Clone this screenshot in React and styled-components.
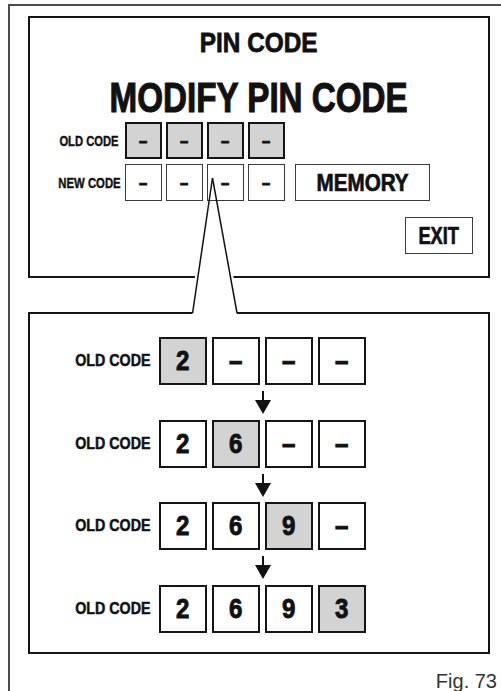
import React from "react";
import styled, { createGlobalStyle } from "styled-components";

const GlobalStyle = createGlobalStyle`
  html, body { margin: 0; padding: 0; background: #fff; }
  body {
    font-family: "Liberation Sans", Arial, sans-serif;
    color: #111;
  }
`;

const Squeeze = styled.span`
  display: inline-block;
  white-space: nowrap;
  transform: scaleX(${(p) => p.$x ?? 0.82});
  transform-origin: center;
  -webkit-text-stroke: ${(p) => p.$stroke ?? 0.6}px currentColor;
`;

const Frame = styled.div`
  margin: 4px 0 0 8px;
  height: 687px;
  box-sizing: border-box;
  border-top: 2px solid #4d4d4d;
  border-left: 2px solid #4d4d4d;
  padding: 10px 0 0 18px;
  overflow: hidden;
`;

const Figure = styled.div`
  position: relative;
  width: 462px;
  display: flex;
  flex-direction: column;
  gap: 34px;
`;

const Screen = styled.section`
  box-sizing: border-box;
  width: 462px;
  height: 262px;
  border: 2px solid #141414;
  display: flex;
  flex-direction: column;
`;

const ScreenTitle = styled.h2`
  margin: 11px 0 0;
  display: flex;
  justify-content: center;
  font-weight: 700;
  font-size: 28px;
  line-height: 28px;
`;

const MainTitle = styled.h1`
  margin: 20px 0 0;
  display: flex;
  justify-content: center;
  font-weight: 700;
  font-size: 42px;
  line-height: 42px;
`;

const Fields = styled.div`
  display: flex;
  flex-direction: column;
  gap: 5px;
  margin: 3px 0 0 26px;
`;

const FieldRow = styled.div`
  display: flex;
  align-items: center;
`;

const FieldLabel = styled.span`
  width: 66px;
  flex: none;
  margin-right: 3px;
  display: flex;
  justify-content: center;
  font-size: 14px;
  font-weight: 700;
`;

const Cells = styled.div`
  display: flex;
  gap: ${(p) => p.$gap}px;
`;

const Cell = styled.div`
  box-sizing: border-box;
  width: ${(p) => p.$size}px;
  height: ${(p) => p.$size}px;
  border: ${(p) => (p.$strong ? "2px solid #151515" : "1.5px solid #3a3a3a")};
  background: ${(p) => (p.$active ? "#d3d3d3" : "#fff")};
  display: flex;
  align-items: center;
  justify-content: center;
  font-weight: 700;
  font-size: ${(p) => p.$font}px;
  line-height: 1;
`;

const ScreenButton = styled.div`
  box-sizing: border-box;
  width: ${(p) => p.$w}px;
  height: 37px;
  border: 1.5px solid #3a3a3a;
  display: flex;
  align-items: center;
  justify-content: center;
  font-size: 24px;
  font-weight: 700;
  line-height: 1;
`;

const MemoryButton = styled(ScreenButton)`
  margin-left: 10px;
`;

const ExitButton = styled(ScreenButton)`
  align-self: flex-end;
  margin: 16px 15px 0 0;
`;

const Detail = styled.section`
  box-sizing: border-box;
  width: 462px;
  height: 342px;
  border: 2px solid #141414;
  padding: 23px 0 0 36px;
  display: flex;
  flex-direction: column;
`;

const StepRow = styled.div`
  display: flex;
  align-items: center;
`;

const StepLabel = styled.span`
  width: 93px;
  flex: none;
  display: flex;
  justify-content: center;
  font-size: 17px;
  font-weight: 700;
`;

const ArrowRow = styled.div`
  height: 34.5px;
  margin-left: 93px;
  width: 207px;
  display: flex;
  justify-content: center;
  align-items: flex-start;
  padding-top: 6px;
  box-sizing: border-box;
`;

const Callout = styled.svg`
  position: absolute;
  left: 0;
  top: 0;
  pointer-events: none;
  overflow: visible;
`;

const Caption = styled.div`
  width: 469px;
  margin-top: 17px;
  text-align: right;
  font-size: 20px;
  line-height: 20px;
  color: #333;
`;

const DownArrow = () => (
  <svg width="16" height="23" viewBox="0 0 16 23">
    <line x1="8" y1="0" x2="8" y2="11" stroke="#111" strokeWidth="2" />
    <polygon points="0,9 16,9 8,23" fill="#111" />
  </svg>
);

const steps = [
  { values: ["2", "–", "–", "–"], active: 0 },
  { values: ["2", "6", "–", "–"], active: 1 },
  { values: ["2", "6", "9", "–"], active: 2 },
  { values: ["2", "6", "9", "3"], active: 3 },
];

export default function App() {
  return (
    <>
      <GlobalStyle />
      <Frame>
        <Figure>
          <Screen>
            <ScreenTitle>
              <Squeeze $x={0.87} $stroke={0.8}>PIN CODE</Squeeze>
            </ScreenTitle>
            <MainTitle>
              <Squeeze $x={0.79} $stroke={1.1}>MODIFY PIN CODE</Squeeze>
            </MainTitle>
            <Fields>
              <FieldRow>
                <FieldLabel>
                  <Squeeze $x={0.8} $stroke={0.4}>OLD CODE</Squeeze>
                </FieldLabel>
                <Cells $gap={4}>
                  {[0, 1, 2, 3].map((i) => (
                    <Cell key={i} $size={37} $font={18} $strong $active>
                      <Squeeze $stroke={0.8}>–</Squeeze>
                    </Cell>
                  ))}
                </Cells>
              </FieldRow>
              <FieldRow>
                <FieldLabel>
                  <Squeeze $x={0.81} $stroke={0.4}>NEW CODE</Squeeze>
                </FieldLabel>
                <Cells $gap={4}>
                  {[0, 1, 2, 3].map((i) => (
                    <Cell key={i} $size={37} $font={18}>
                      <Squeeze $stroke={0.8}>–</Squeeze>
                    </Cell>
                  ))}
                </Cells>
                <MemoryButton $w={135}>
                  <Squeeze $x={0.86} $stroke={0.7}>MEMORY</Squeeze>
                </MemoryButton>
              </FieldRow>
            </Fields>
            <ExitButton $w={68}>
              <Squeeze $x={0.76} $stroke={0.7}>EXIT</Squeeze>
            </ExitButton>
          </Screen>
          <Detail>
            {steps.map((s, idx) => (
              <React.Fragment key={idx}>
                {idx > 0 && (
                  <ArrowRow>
                    <DownArrow />
                  </ArrowRow>
                )}
                <StepRow>
                  <StepLabel>
                    <Squeeze $x={0.84} $stroke={0.5}>OLD CODE</Squeeze>
                  </StepLabel>
                  <Cells $gap={5}>
                    {s.values.map((v, i) => (
                      <Cell key={i} $size={48} $font={28} $strong $active={i === s.active}>
                        <Squeeze $x={0.86} $stroke={0.9}>{v}</Squeeze>
                      </Cell>
                    ))}
                  </Cells>
                </StepRow>
              </React.Fragment>
            ))}
          </Detail>
          <Callout width="462" height="640" viewBox="28 16 462 640">
            <polygon points="205.5,205 220.4,205 238.5,305 190.8,305" fill="#fff" />
            <polygon points="194.3,300 235,300 237,314.5 192.4,314.5" fill="#fff" />
            <line x1="212.5" y1="178" x2="192.6" y2="313" stroke="#111" strokeWidth="1.5" />
            <line x1="212.5" y1="178" x2="237" y2="313" stroke="#111" strokeWidth="1.5" />
          </Callout>
        </Figure>
        <Caption>Fig. 73</Caption>
      </Frame>
    </>
  );
}
